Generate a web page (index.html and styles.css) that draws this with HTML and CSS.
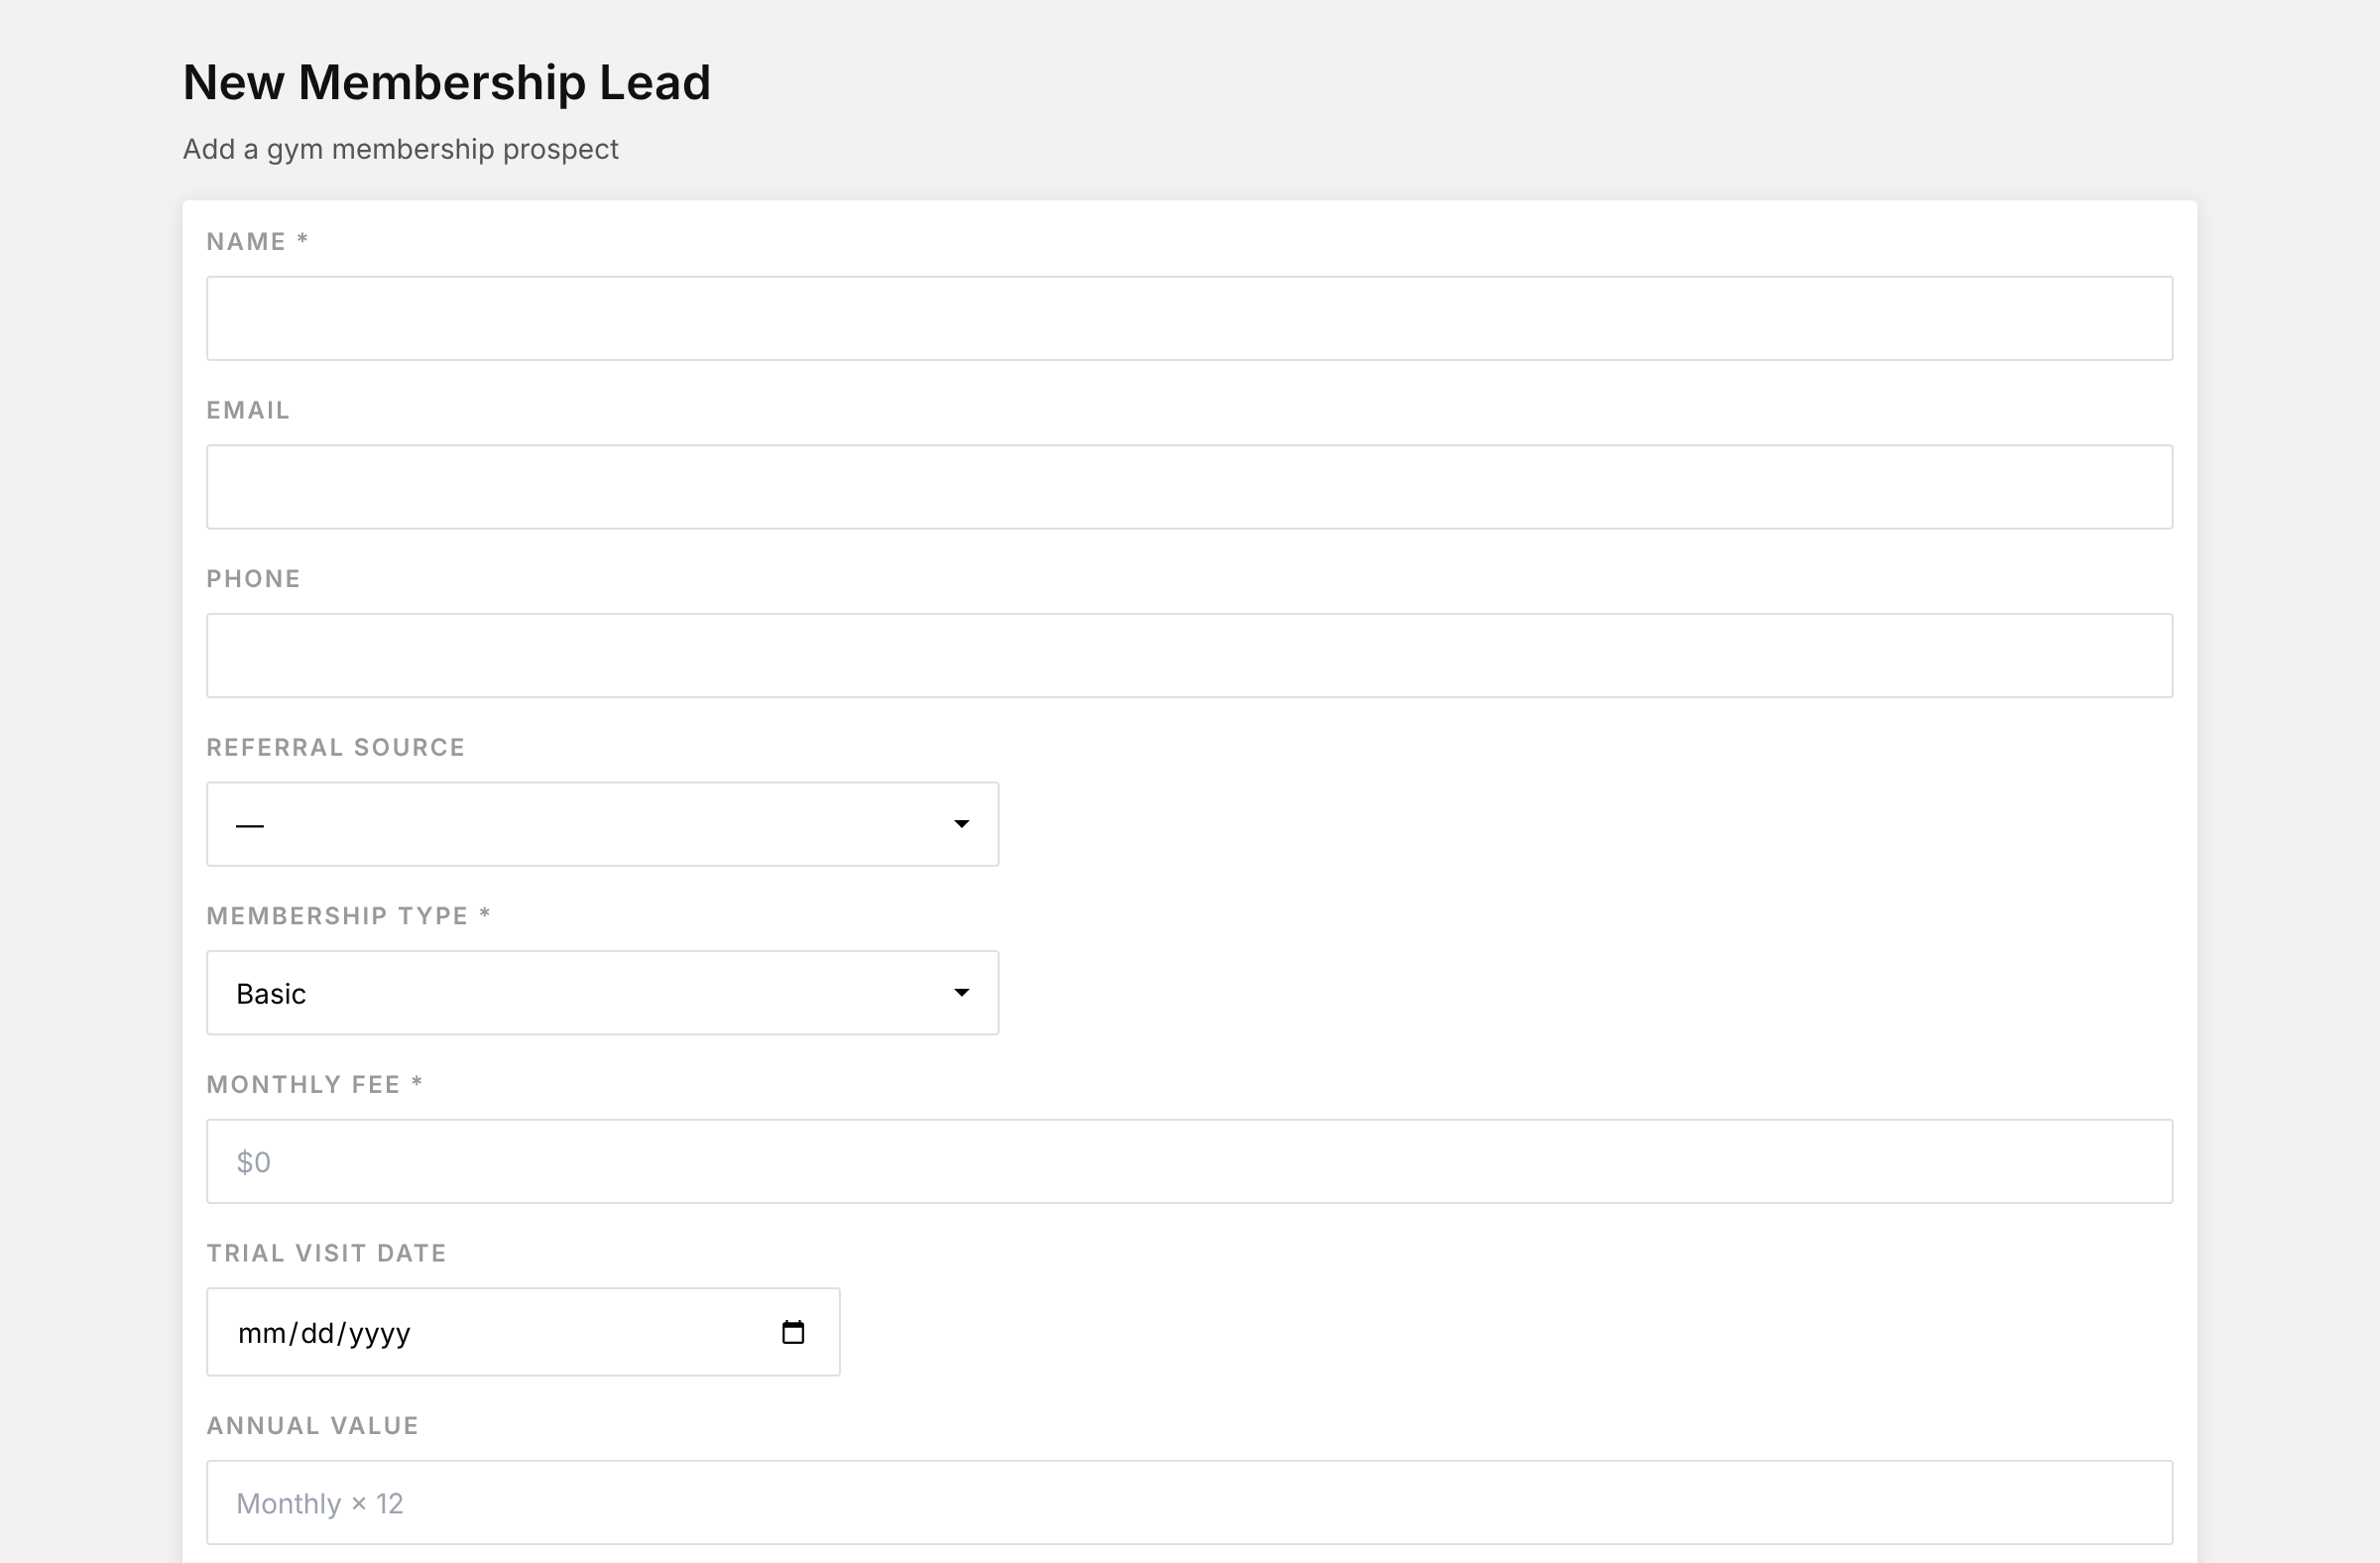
FILE: index.html
```html
<!DOCTYPE html>
<html lang="en">
<head>
  <meta charset="UTF-8">
  <meta name="viewport" content="width=device-width, initial-scale=1.0">
  <title>New Membership Lead</title>
  <link rel="stylesheet" href="styles.css">
</head>
<body>
  <div class="page">
    <h1>New Membership Lead</h1>
    <p class="subtitle">Add a gym membership prospect</p>
    <form class="card">
      <div class="field">
        <label for="name">Name *</label>
        <input type="text" id="name">
      </div>
      <div class="field">
        <label for="email">Email</label>
        <input type="email" id="email">
      </div>
      <div class="field">
        <label for="phone">Phone</label>
        <input type="tel" id="phone">
      </div>
      <div class="field">
        <label for="source">Referral Source</label>
        <div class="select-wrap">
          <select id="source">
            <option>—</option>
            <option>Friend</option>
            <option>Walk-in</option>
          </select>
        </div>
      </div>
      <div class="field">
        <label for="type">Membership Type *</label>
        <div class="select-wrap">
          <select id="type">
            <option>Basic</option>
            <option>Premium</option>
          </select>
        </div>
      </div>
      <div class="field">
        <label for="fee">Monthly Fee *</label>
        <input type="text" id="fee" placeholder="$0">
      </div>
      <div class="field">
        <label for="trial">Trial Visit Date</label>
        <input type="date" id="trial" class="date">
      </div>
      <div class="field">
        <label for="annual">Annual Value</label>
        <input type="text" id="annual" placeholder="Monthly × 12">
      </div>
    </form>
  </div>
</body>
</html>
```

FILE: styles.css
```css
html {
  zoom: 2;
}

body {
  margin: 0;
  background-color: #f2f2f2;
  color: #111;
  font-family: Inter, "Noto Sans", sans-serif;
  text-rendering: geometricPrecision;
  height: 788px;
  overflow: hidden;
}

.page {
  max-width: 1016px;
  margin: 0 auto;
  padding-top: 27px;
  will-change: transform;
}

h1 {
  margin: 0 0 10.5px;
  font-size: 24px;
  font-weight: 600;
  line-height: 1.2;
}

.subtitle {
  margin: 0 0 17.5px;
  font-size: 14px;
  color: #555;
}

.card {
  background-color: #fff;
  border-radius: 3px;
  padding: 13.5px 12px 12px;
  box-shadow: 0 1px 10px rgba(0, 0, 0, 0.1);
}

.field {
  margin-bottom: 17.5px;
}

label {
  display: block;
  margin-bottom: 10px;
  font-size: 12px;
  font-weight: 600;
  letter-spacing: 0.1em;
  text-transform: uppercase;
  color: #999;
}

input,
select {
  display: block;
  box-sizing: border-box;
  width: 100%;
  height: 43px;
  padding: 1.5px 14px 0;
  border: 1px solid #e0e0e0;
  border-radius: 2px;
  background-color: #fff;
  color: #000;
  font-family: inherit;
  font-size: 14px;
  text-rendering: geometricPrecision;
}

input::placeholder {
  color: #9ca3af;
}

select {
  appearance: none;
}

.select-wrap {
  position: relative;
  width: 400px;
}

/* filled triangle instead of the default chevron */
.select-wrap::after {
  content: "";
  position: absolute;
  top: 19.5px;
  right: 15px;
  border-left: 4px solid transparent;
  border-right: 4px solid transparent;
  border-top: 4px solid #000;
  pointer-events: none;
}

.date {
  width: 320px;
  height: 45px;
  padding-top: 1px;
}
```
